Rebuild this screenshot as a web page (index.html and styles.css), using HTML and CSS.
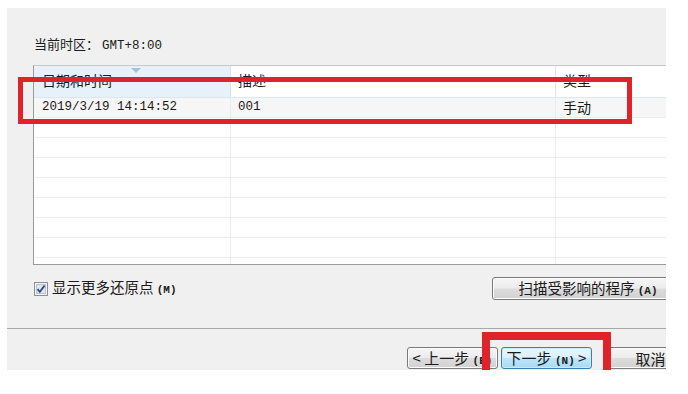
FILE: index.html
```html
<!DOCTYPE html>
<html lang="zh-CN">
<head>
<meta charset="UTF-8">
<title>系统还原</title>
<link rel="stylesheet" href="styles.css">
</head>
<body>

<div class="dialog">
  <div class="main">
    <div class="zone">当前时区： <span class="mono">GMT+8:00</span></div>

    <div class="list">
      <div class="row head">
        <div class="cell sorted">
          <svg class="sort" width="10" height="5" viewBox="0 0 10 5"><path d="M0 0 L10 0 L5 5 Z" fill="#9fc2de"/></svg>
          <span>日期和时间</span>
        </div>
        <div class="cell">描述</div>
        <div class="cell">类型</div>
      </div>
      <div class="body">
        <div class="row picked">
          <div class="cell mono">2019/3/19 14:14:52</div>
          <div class="cell mono">001</div>
          <div class="cell">手动</div>
        </div>
        <div class="row"><div class="cell"></div><div class="cell"></div><div class="cell"></div></div>
        <div class="row"><div class="cell"></div><div class="cell"></div><div class="cell"></div></div>
        <div class="row"><div class="cell"></div><div class="cell"></div><div class="cell"></div></div>
        <div class="row"><div class="cell"></div><div class="cell"></div><div class="cell"></div></div>
        <div class="row"><div class="cell"></div><div class="cell"></div><div class="cell"></div></div>
        <div class="row"><div class="cell"></div><div class="cell"></div><div class="cell"></div></div>
        <div class="row"><div class="cell"></div><div class="cell"></div><div class="cell"></div></div>
        <div class="row"><div class="cell"></div><div class="cell"></div><div class="cell"></div></div>
      </div>
    </div>

    <div class="options">
      <label class="check">
        <svg width="14" height="14" viewBox="0 0 14 14">
          <rect x="0.5" y="0.5" width="13" height="13" fill="#f4f4f4" stroke="#8e8f8f"/>
          <rect x="2.5" y="2.5" width="9" height="9" fill="#dfe6ee" stroke="#b9c3cf"/>
          <path d="M3.5 7.2 L5.8 9.8 L10.6 3.6" fill="none" stroke="#2c4a8a" stroke-width="1.8"/>
        </svg>
        <span>显示更多还原点 <span class="mono small">(M)</span></span>
      </label>
      <button class="btn scan">扫描受影响的程序 <span class="mono small">(A)</span></button>
    </div>
  </div>

  <div class="footer">
    <button class="btn">&lt; 上一步 <span class="mono small">(B)</span></button>
    <button class="btn default">下一步 <span class="mono small">(N)</span> &gt;</button>
    <button class="btn cancel">取消</button>
  </div>

  <div class="mark mark-row"></div>
  <div class="mark mark-next"></div>
</div>

</body>
</html>
```

FILE: styles.css
```css
body {
  margin: 0;
  background-color: #fff;
  font-family: "Noto Sans CJK SC", "Liberation Sans", sans-serif;
  font-size: 14px;
  color: #1a1a1a;
}

.dialog {
  position: relative;
  width: 659px;
  height: 362px;
  margin: 8px 0 0 7px;
  background-color: #f0f0f0;
  overflow: hidden;
}

.main {
  box-sizing: border-box;
  padding: 28px 0 0 26px;
  height: 320px;
}

.mono {
  font-family: "Liberation Mono", monospace;
  font-size: 12.5px;
}

.small {
  font-size: 11px;
  font-weight: bold;
}

.zone {
  margin-left: 1px;
  line-height: 16px;
  font-size: 13px;
}

.list {
  width: 660px;
  margin-top: 11px;
  background-color: #fff;
  border-top: 1px solid #c9c9c9;
  border-left: 1px solid #9a9a9a;
  border-bottom: 1px solid #9a9a9a;
}

.row {
  display: grid;
  grid-template-columns: 197px 325px 1fr;
  height: 19px;
  border-bottom: 1px solid #ececec;
}

.cell {
  border-right: 1px solid #ececec;
  line-height: 19px;
  padding-left: 7px;
  white-space: nowrap;
}

.row .cell:first-child {
  padding-left: 8px;
}

.head {
  height: 31px;
  border-bottom: 1px solid #dbe8f2;
}

.head .cell {
  padding-top: 6px;
  line-height: 16px;
  border-right: 1px solid #e3e3e3;
}

.head .sorted {
  display: flex;
  flex-direction: column;
  padding-top: 2px;
  background-color: #e6f1fa;
  border-right: 1px solid #d4e3ee;
}

.sort {
  align-self: center;
  margin-bottom: -1px;
}

.body {
  height: 166px;
  overflow: hidden;
}

.picked {
  background-color: #f6f6f6;
}

.options {
  display: flex;
  align-items: center;
  width: 651px;
  height: 23px;
  margin-top: 12px;
}

.check {
  display: flex;
  align-items: center;
  gap: 4px;
  margin-left: 1px;
  line-height: 16px;
  font-size: 14.5px;
}

.check svg {
  display: block;
}

.btn {
  height: 23px;
  padding: 0;
  font-family: inherit;
  font-size: 14.5px;
  line-height: 19px;
  color: #1a1a1a;
  border: 1px solid #7a7a7a;
  border-radius: 3px;
  background: linear-gradient(#f6f6f6, #ececec 48%, #dcdcdc 52%, #d2d2d2);
  box-shadow: inset 0 0 0 1px #fcfcfc;
}

.scan {
  width: 192px;
  margin-left: auto;
}

.footer {
  display: flex;
  gap: 3px;
  padding: 18px 0 0 400px;
  width: 400px;
  border-top: 1px solid #a8a8a8;
}

.footer .btn {
  flex: none;
  width: 91px;
  height: 22px;
  font-size: 15px;
}

.footer .default {
  border-color: #3c7fb1;
  background: linear-gradient(#eaf6fd, #d9f0fc 48%, #bee6fd 52%, #a7d9f5);
  box-shadow: inset 0 0 0 1px #c9ecfd;
}

.footer .cancel {
  margin-left: 10px;
}

.mark {
  position: absolute;
  border-style: solid;
  border-color: #e0222b;
}

.mark-row {
  left: 11px;
  top: 69px;
  width: 604px;
  height: 37px;
  border-width: 5px;
}

.mark-next {
  left: 475px;
  top: 324px;
  width: 113px;
  height: 60px;
  border-width: 8px;
}
```
